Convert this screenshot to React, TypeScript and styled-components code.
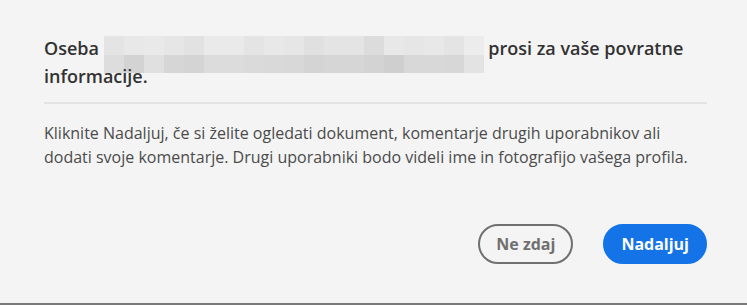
import styled, { createGlobalStyle } from "styled-components";

const GlobalStyle = createGlobalStyle`
  html, body {
    margin: 0;
    padding: 0;
    background: #f4f4f4;
  }
  body {
    font-family: "Open Sans", "Noto Sans", sans-serif;
  }
`;

// redacted name, two rows of mosaic tiles
const topRow = [
  "#e4e4e4", "#e8e8e8", "#e9e9e9", "#e6e6e6", "#e2e2e2", "#eaeaea", "#eaeaea", "#e4e4e4", "#e8e8e8", "#e6e6e6",
  "#e0e0e0", "#e4e4e4", "#e4e4e4", "#dcdcdc", "#e8e8e8", "#e6e6e6", "#e8e8e8", "#e4e4e4", "#ececec",
];
const bottomRow = [
  "#dddddd", "#d3d3d3", "#e0e0e0", "#d6d6d6", "#d4d4d4", "#dcdcdc", "#dcdcdc", "#dadada", "#d9d9d9", "#d8d8d8",
  "#d4d4d4", "#d6d6d6", "#d6d6d6", "#d3d3d3", "#cfcfcf", "#d8d8d8", "#d8d8d8", "#d7d7d7", "#e3e3e3",
];

export default function App() {
  return (
    <>
      <GlobalStyle />
      <Dialog>
        <Title>
          Oseba{" "}
          <Mosaic>
            {[...topRow, ...bottomRow].map((c, i) => (
              <Tile key={i} $color={c} />
            ))}
          </Mosaic>{" "}
          prosi za vaše povratne informacije.
        </Title>
        <Divider />
        <Body>
          Kliknite Nadaljuj, če si želite ogledati dokument, komentarje drugih uporabnikov ali
          <br />
          dodati svoje komentarje. Drugi uporabniki bodo videli ime in fotografijo vašega profila.
        </Body>
        <Footer>
          <Button $variant="secondary">Ne zdaj</Button>
          <Button $variant="primary">Nadaljuj</Button>
        </Footer>
      </Dialog>
    </>
  );
}

const Dialog = styled.div`
  box-sizing: border-box;
  height: 305px;
  display: flex;
  flex-direction: column;
  padding: 35px 40px 0 44px;
  background: #f4f4f4;
  border-bottom: 2px solid #7a7a7a;
`;

const Title = styled.h1`
  margin: 0;
  font-size: 18px;
  line-height: 26px;
  font-weight: 600;
  color: #323232;
`;

const Mosaic = styled.span`
  display: inline-grid;
  grid-template-columns: repeat(19, 20px);
  grid-template-rows: 19px 18px;
  vertical-align: baseline;
  margin: -12px 0 -10px;
`;

const Tile = styled.span<{ $color: string }>`
  background: ${(p) => p.$color};
`;

const Divider = styled.div`
  height: 2px;
  margin-top: 13px;
  background: #e3e3e3;
`;

const Body = styled.p`
  margin: 17px 0 0;
  font-size: 16px;
  line-height: 24px;
  color: #4b4b4b;
  white-space: nowrap;
`;

const Footer = styled.div`
  margin-top: auto;
  padding-bottom: 39px;
  display: flex;
  justify-content: flex-end;
  gap: 30px;
`;

const Button = styled.button<{ $variant: "primary" | "secondary" }>`
  box-sizing: border-box;
  height: 40px;
  padding: 0 16px;
  border-radius: 20px;
  font-family: inherit;
  font-size: 16px;
  font-weight: 700;
  border: 2px solid ${(p) => (p.$variant === "primary" ? "#1473e6" : "#707070")};
  background: ${(p) => (p.$variant === "primary" ? "#1473e6" : "transparent")};
  color: ${(p) => (p.$variant === "primary" ? "#ffffff" : "#707070")};
  cursor: pointer;
`;
